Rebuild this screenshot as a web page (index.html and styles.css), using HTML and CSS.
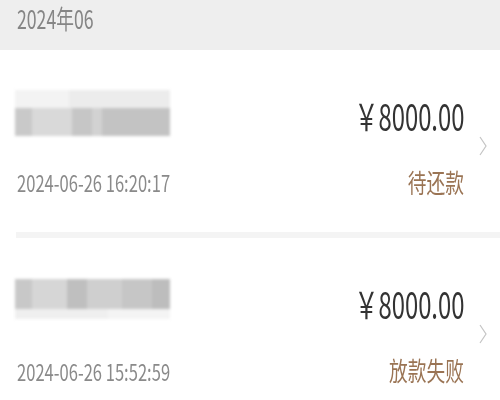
FILE: index.html
```html
<!DOCTYPE html>
<html lang="zh-CN">
<head>
<meta charset="utf-8">
<title>借款记录</title>
<link rel="stylesheet" href="styles.css">
</head>
<body>
<div class="page">
  <div class="month"><span class="sq sq-left">2024年06</span></div>
  <div class="item">
    <div class="left">
      <div class="name name-a">
        <div class="name-top"></div>
        <div class="name-main">
          <span class="seg s1"></span><span class="seg s2"></span><span class="seg s3"></span><span class="seg s4"></span><span class="seg s5"></span>
        </div>
      </div>
      <div class="date"><span class="sq sq-left">2024-06-26 16:20:17</span></div>
    </div>
    <div class="right">
      <div class="amount"><span class="sq sq-right">￥8000.00</span></div>
      <div class="status"><span class="sq sq-right">待还款</span></div>
    </div>
    <svg class="chev" viewBox="0 0 8 20" width="8" height="20"><path d="M1 1 L7 10 L1 19" fill="none" stroke="#c4c4c4" stroke-width="1.2"/></svg>
  </div>
  <div class="sep"></div>
  <div class="item">
    <div class="left">
      <div class="name name-b">
        <div class="name-main">
          <span class="seg t1"></span><span class="seg t2"></span><span class="seg t3"></span><span class="seg t4"></span><span class="seg t5"></span><span class="seg t6"></span>
        </div>
        <div class="name-bottom"></div>
      </div>
      <div class="date"><span class="sq sq-left">2024-06-26 15:52:59</span></div>
    </div>
    <div class="right">
      <div class="amount"><span class="sq sq-right">￥8000.00</span></div>
      <div class="status"><span class="sq sq-right">放款失败</span></div>
    </div>
    <svg class="chev" viewBox="0 0 8 20" width="8" height="20"><path d="M1 1 L7 10 L1 19" fill="none" stroke="#c4c4c4" stroke-width="1.2"/></svg>
  </div>
</div>
</body>
</html>
```
FILE: styles.css
```css
html, body {
  margin: 0;
  padding: 0;
  background: #ffffff;
}
body {
  font-family: "Noto Sans CJK SC", "Noto Sans", sans-serif;
  width: 500px;
  height: 400px;
  overflow: hidden;
}
.sq {
  display: inline-block;
  white-space: nowrap;
}
.sq-left { transform-origin: left center; }
.sq-right { transform-origin: right center; }

.month {
  height: 50px;
  background: #eeeeee;
  padding: 2px 0 0 17px;
  box-sizing: border-box;
  font-size: 26px;
  line-height: 32px;
  color: #858585;
}
.month .sq { transform: scaleX(0.68); }

.item {
  display: flex;
  align-items: center;
  padding: 40px 13px 35px 15px;
  height: 182px;
  box-sizing: border-box;
}
.left {
  flex: 1;
  display: flex;
  flex-direction: column;
  gap: 27px;
}
.right {
  display: flex;
  flex-direction: column;
  align-items: flex-end;
  gap: 27px;
  margin-right: 15px;
}
.name {
  width: 155px;
  height: 50px;
  display: flex;
  flex-direction: column;
  filter: blur(1.5px);
}
.name-top {
  height: 18px;
  background: linear-gradient(90deg, #f3f3f3 0 35%, #ececec 35% 100%);
}
.name-main {
  height: 28px;
  display: flex;
}
.name-bottom {
  height: 10px;
  background: linear-gradient(90deg, #efefef 0 60%, #f4f4f4 60% 100%);
}
.name-b { height: 50px; padding-top: 2px; }
.name-b .name-main { height: 30px; }
.seg { display: block; height: 100%; }
.s1 { width: 17px; background: #c9c9c9; }
.s2 { width: 40px; background: #d9d9d9; }
.s3 { width: 20px; background: #c6c6c6; }
.s4 { width: 10px; background: #d2d2d2; }
.s5 { flex: 1; background: #c3c3c3; }
.t1 { width: 17px; background: #c8c8c8; }
.t2 { width: 35px; background: #d6d6d6; }
.t3 { width: 20px; background: #bfbfbf; }
.t4 { width: 35px; background: #cfcfcf; }
.t5 { width: 30px; background: #c6c6c6; }
.t6 { flex: 1; background: #bdbdbd; }

.date {
  height: 30px;
  font-size: 23px;
  line-height: 30px;
  color: #8a8a8a;
  padding-left: 2px;
}
.date .sq { transform: scaleX(0.72); }

.amount {
  height: 50px;
  font-size: 37px;
  line-height: 50px;
  color: #333333;
}
.amount .sq { transform: scaleX(0.645); }

.status {
  height: 30px;
  font-size: 26px;
  line-height: 30px;
  color: #9a7454;
}
.status .sq { transform: scaleX(0.72); }

.chev {
  flex: none;
  display: block;
  margin-top: 4px;
}

.sep {
  height: 6px;
  margin-left: 16px;
  background: #f4f4f4;
}
```
